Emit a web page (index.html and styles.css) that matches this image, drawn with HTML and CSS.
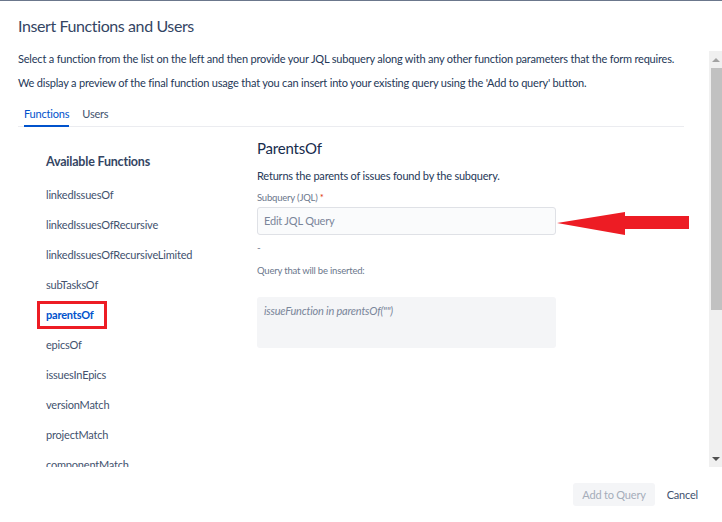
FILE: index.html
```html
<!DOCTYPE html>
<html lang="en">
<head>
    <meta charset="UTF-8">
    <title>Insert Functions and Users</title>
    <link rel="stylesheet" href="styles.css">
</head>
<body>
    <div class="modal">
        <div class="modal-header">
            <h2 class="modal-title">Insert Functions and Users</h2>
        </div>

        <div class="modal-body">
            <div class="body-content">
                <p class="intro">Select a function from the list on the left and then provide your JQL subquery along with any other function parameters that the form requires.</p>
                <p class="intro second">We display a preview of the final function usage that you can insert into your existing query using the 'Add to query' button.</p>

                <div class="tabs">
                    <span class="tab active">Functions</span>
                    <span class="tab">Users</span>
                </div>

                <div class="columns">
                    <div class="function-list">
                        <h3 class="list-title">Available Functions</h3>
                        <ul>
                            <li>linkedIssuesOf</li>
                            <li>linkedIssuesOfRecursive</li>
                            <li>linkedIssuesOfRecursiveLimited</li>
                            <li>subTasksOf</li>
                            <li><span class="selected">parentsOf</span></li>
                            <li>epicsOf</li>
                            <li>issuesInEpics</li>
                            <li>versionMatch</li>
                            <li>projectMatch</li>
                            <li>componentMatch</li>
                        </ul>
                    </div>

                    <div class="function-form">
                        <h3 class="form-title">ParentsOf</h3>
                        <p class="form-desc">Returns the parents of issues found by the subquery.</p>
                        <label class="field-label">Subquery (JQL)<span class="required">*</span></label>
                        <div class="jql-input">Edit JQL Query</div>
                        <div class="dash">-</div>
                        <div class="field-label preview-label">Query that will be inserted:</div>
                        <div class="preview">issueFunction in parentsOf("")</div>
                    </div>
                </div>
            </div>

            <div class="scrollbar">
                <div class="sb-btn"><span class="sb-up"></span></div>
                <div class="sb-track"><div class="sb-thumb"></div></div>
                <div class="sb-btn"><span class="sb-down"></span></div>
            </div>
        </div>

        <div class="modal-footer">
            <button class="btn btn-disabled">Add to Query</button>
            <button class="btn btn-link">Cancel</button>
        </div>

        <!-- annotation arrow pointing at the JQL field -->
        <svg class="red-arrow" width="136" height="28" viewBox="0 0 136 28">
            <path d="M1 14 L69 3 L69 7 L133 7 L133 20 L69 20 L69 26 Z" fill="#ed1c24"/>
        </svg>
    </div>
</body>
</html>
```

FILE: styles.css
```css
body {
    margin: 0;
    font-family: Lato, "Open Sans", sans-serif;
    letter-spacing: -0.2px;
    background-color: white;
    color: #253858;
}
.modal {
    position: relative;
    width: 722px;
    height: 522px;
    border-top: 1px solid #6b778c;
    box-sizing: border-box;
    display: flex;
    flex-direction: column;
    overflow: hidden;
}
.modal-header {
    height: 50px;
    padding-left: 18px;
    display: flex;
    align-items: center;
    flex-shrink: 0;
}
.modal-title {
    margin: 0;
    font-size: 16px;
    font-weight: 400;
    letter-spacing: -0.4px;
    color: #344563;
    line-height: 20px;
}
.modal-body {
    height: 416px;
    display: flex;
    flex-shrink: 0;
}
.body-content {
    flex: 1;
    overflow: hidden;
    padding: 0 25px 0 18px;
}
.intro {
    margin: 0;
    font-size: 11px;
    line-height: 16px;
    white-space: nowrap;
}
.intro.second {
    margin-top: 8px;
}
.tabs {
    margin-top: 15px;
    display: flex;
    gap: 13px;
    padding-left: 6px;
    border-bottom: 1px solid #ebecf0;
}
.tab {
    font-size: 11px;
    line-height: 16px;
    padding-bottom: 3px;
    color: #42526e;
}
.tab.active {
    color: #0052cc;
    border-bottom: 2px solid #0052cc;
    margin-bottom: -1px;
}
.columns {
    display: flex;
}
.function-list {
    width: 211px;
    padding-left: 28px;
}
.list-title {
    margin: 26px 0 0;
    font-size: 12.5px;
    font-weight: 700;
    line-height: 18px;
    color: #344563;
}
.function-list ul {
    list-style: none;
    margin: 9px 0 0;
    padding: 0;
}
.function-list li {
    height: 30px;
    line-height: 30px;
    font-size: 11px;
    color: #42526e;
}
.selected {
    position: relative;
    color: #0052cc;
    font-weight: 700;
}
.selected::before {
    content: "";
    position: absolute;
    left: -9px;
    right: -13px;
    top: -7px;
    bottom: -8px;
    border: 3px solid #ed1c24;
}
.function-form {
    width: 299px;
}
.form-title {
    margin: 11px 0 0;
    font-size: 15px;
    font-weight: 400;
    line-height: 20px;
    color: #172b4d;
}
.form-desc {
    margin: 10px 0 0;
    font-size: 11px;
    line-height: 16px;
}
.field-label {
    display: block;
    margin-top: 7px;
    font-size: 9.5px;
    line-height: 14px;
    color: #6b778c;
}
.required {
    color: #de350b;
    margin-left: 2px;
}
.jql-input {
    margin-top: 2px;
    height: 28px;
    box-sizing: border-box;
    border: 1px solid #dfe1e6;
    border-radius: 3px;
    background-color: #fafbfc;
    padding-left: 6px;
    font-size: 11px;
    line-height: 26px;
    color: #7a869a;
}
.dash {
    margin-top: 5px;
    font-size: 10px;
    line-height: 14px;
    color: #6b778c;
}
.preview-label {
    margin-top: 10px;
}
.preview {
    margin-top: 19px;
    height: 51px;
    box-sizing: border-box;
    border-radius: 3px;
    background-color: #f4f5f7;
    padding: 6px 7px;
    font-size: 11px;
    line-height: 16px;
    font-style: italic;
    color: #7a869a;
}
.scrollbar {
    width: 13px;
    background-color: #f0f0f0;
    display: flex;
    flex-direction: column;
}
.sb-btn {
    height: 17px;
    display: flex;
    align-items: center;
    justify-content: center;
}
.sb-up {
    width: 0;
    height: 0;
    border-left: 4px solid transparent;
    border-right: 4px solid transparent;
    border-bottom: 4px solid #a3a3a3;
}
.sb-down {
    width: 0;
    height: 0;
    border-left: 4px solid transparent;
    border-right: 4px solid transparent;
    border-top: 4px solid #505050;
}
.sb-track {
    flex: 1;
}
.sb-thumb {
    margin-left: 2px;
    height: 242px;
    background-color: #c1c1c1;
}
.modal-footer {
    flex: 1;
    display: flex;
    justify-content: flex-end;
    align-items: center;
    gap: 3px;
    padding-right: 15px;
}
.btn {
    height: 23px;
    border: none;
    border-radius: 3px;
    padding: 0 9px;
    font-family: inherit;
    font-size: 11px;
    letter-spacing: inherit;
    background: none;
}
.btn-disabled {
    background-color: #f4f5f7;
    color: #a5adba;
}
.btn-link {
    color: #42526e;
}
.red-arrow {
    position: absolute;
    left: 556px;
    top: 208px;
}
```
